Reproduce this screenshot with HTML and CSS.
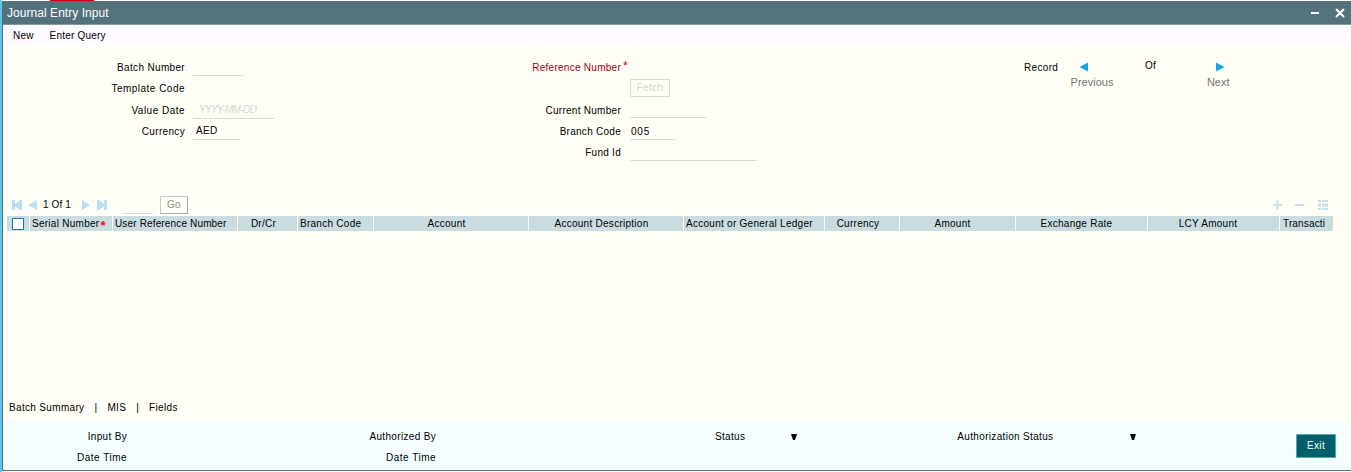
FILE: index.html
```html
<!DOCTYPE html>
<html lang="en">
<head>
<meta charset="utf-8">
<title>Journal Entry Input</title>
<link rel="stylesheet" href="styles.css">
</head>
<body>
<div class="top-strip"><span class="accent"></span></div>
<div class="window">
  <header class="titlebar">
    <h1>Journal Entry Input</h1>
    <svg class="window-controls" width="36" height="12" viewBox="0 0 36 12"><path d="M1 6h8" stroke="#fff" stroke-width="2"/><path d="M26 2l8 8M34 2l-8 8" stroke="#fff" stroke-width="2"/></svg>
  </header>
  <nav class="menu"><span>New</span><span>Enter Query</span></nav>
  <main>
    <section class="form">
      <div class="group group-left">
        <div class="row"><label>Batch Number</label><span class="field w52"></span></div>
        <div class="row"><label class="wide">Template Code</label></div>
        <div class="row"><label class="wide">Value Date</label><span class="field w82 hint">YYYY-MM-DD</span></div>
        <div class="row"><label>Currency</label><span class="field w47 value">AED</span></div>
      </div>
      <div class="group group-mid">
        <div class="row"><label class="required">Reference Number</label><span class="star">*</span></div>
        <div class="row"><label></label><button class="fetch">Fetch</button></div>
        <div class="row"><label>Current Number</label><span class="field short w77"></span></div>
        <div class="row"><label>Branch Code</label><span class="field w47 code">005</span></div>
        <div class="row"><label>Fund Id</label><span class="field w127"></span></div>
      </div>
      <div class="record">
        <span class="record-label">Record</span>
        <div class="step prev"><svg width="10" height="10" viewBox="0 0 10 10"><path d="M9 0.5v9L0.5 5z" fill="#1ca4e2"/></svg><span>Previous</span></div>
        <span class="of">Of</span>
        <div class="step next"><svg width="10" height="10" viewBox="0 0 10 10"><path d="M1 0.5v9L9.5 5z" fill="#1ca4e2"/></svg><span>Next</span></div>
      </div>
    </section>
    <div class="toolbar">
      <svg class="first" width="10" height="10" viewBox="0 0 10 10" fill="#b9dff0"><path d="M0 0h3v4l5-4h2v10H8L3 6v4H0z"/></svg>
      <svg class="back" width="10" height="10" viewBox="0 0 10 10" fill="#b9dff0"><path d="M9 0v10L0 5z"/></svg>
      <span class="page">1 Of 1</span>
      <svg class="forward" width="10" height="10" viewBox="0 0 10 10" fill="#b9dff0"><path d="M1 0v10l8-5z"/></svg>
      <svg class="last" width="10" height="10" viewBox="0 0 10 10" fill="#b9dff0"><path d="M10 0H7v4L2 0H0v10h2l5-4v4h3z"/></svg>
      <span class="page-input"></span>
      <button class="go">Go</button>
      <svg class="tools" width="56" height="10" viewBox="0 0 56 10" fill="#c5e0e8"><path d="M0 4h9v2H0zM3.5 0.5h2v9h-2zM22 4h9v2h-9z"/><path d="M45 0h3v2h-3zM49 0h6v2h-6zM45 3.5h3v3h-3zM49 3.5h6v3h-6zM45 8h3v2h-3zM49 8h6v2h-6z"/></svg>
    </div>
    <div class="table">
      <div class="thead">
        <div class="check"><span class="box"></span></div>
        <div class="serial">Serial Number<b>*</b></div>
        <div class="userref">User Reference Number</div>
        <div class="drcr">Dr/Cr</div>
        <div class="branch">Branch Code</div>
        <div class="account">Account</div>
        <div class="description">Account Description</div>
        <div class="ledger">Account or General Ledger</div>
        <div class="currency">Currency</div>
        <div class="amount">Amount</div>
        <div class="rate">Exchange Rate</div>
        <div class="lcy">LCY Amount</div>
        <div class="cut">Transacti</div>
      </div>
      <div class="tbody"></div>
    </div>
    <nav class="links"><span>Batch Summary</span><span>|</span><span>MIS</span><span>|</span><span>Fields</span></nav>
  </main>
  <footer>
    <div class="audit"><span>Input By</span><span class="wide">Date Time</span></div>
    <div class="audit authorized"><span>Authorized By</span><span class="wide">Date Time</span></div>
    <div class="status"><span>Status</span><svg width="6" height="7" viewBox="0 0 6 7"><path d="M0 0h6L4 6H2z"/></svg></div>
    <div class="status auth-status"><span>Authorization Status</span><svg width="6" height="7" viewBox="0 0 6 7"><path d="M0 0h6L4 6H2z"/></svg></div>
    <button class="exit">Exit</button>
  </footer>
</div>
</body>
</html>
```
FILE: styles.css
```css
* { box-sizing: border-box; }
body { margin: 0; width: 1351px; height: 472px; overflow: hidden; border-left: 2px solid #5bc6ea; background: #fffff7; font: 10px/12px "Liberation Sans", Arial, sans-serif; letter-spacing: .33px; color: #000; }
svg { display: block; flex: none; }
button { font: inherit; letter-spacing: inherit; padding: 0; margin: 0; background: transparent; }
.top-strip { height: 1px; padding-left: 48px; }
.accent { display: block; width: 44px; height: 1px; background: #cf0000; }
.window { height: 470px; border-left: 1px solid #53727c; border-bottom: 1px solid #53727c; display: flex; flex-direction: column; white-space: nowrap; }
.titlebar { height: 24px; flex: none; background: #53727c; border-bottom: 1px solid #82989f; display: flex; align-items: center; justify-content: space-between; padding: 0 5px 0 4px; }
h1 { margin: 0; font-size: 12px; line-height: 16px; font-weight: 400; color: #fff; letter-spacing: .05px; }
.menu { height: 20px; flex: none; background: #fffaff; display: flex; gap: 16px; padding: 5px 0 0 10px; letter-spacing: .2px; }
main { height: 376px; flex: none; padding-left: 4px; }
.form { display: flex; height: 150px; padding-top: 12px; }
.group { display: grid; grid-auto-rows: 21.3px; align-content: start; }
.group-left { width: 400px; }
.group-mid { width: 600px; }
.row { display: flex; gap: 8px; height: 21px; }
.row label { flex: none; text-align: right; line-height: 22px; }
.wide { letter-spacing: .48px; }
.group-left label { width: 178px; }
.group-mid label { width: 214px; letter-spacing: .27px; }
.group-mid .row { gap: 9px; }
.field { height: 19px; border-bottom: 1px solid #dadad6; line-height: 20px; }
.w52 { width: 52px; } .w82 { width: 82px; } .w47 { width: 47px; } .w77 { width: 77px; } .w127 { width: 127px; }
.field.short { height: 18px; }
.hint { padding-left: 6px; color: #d4d4d0; font-style: italic; line-height: 19px; letter-spacing: -.65px; }
.value { padding-left: 3px; }
.code { padding-left: 1px; letter-spacing: .8px; line-height: 21px; }
.required { color: #9c0012; }
.group-mid .star { color: #d00010; margin-left: -7px; font-size: 12px; line-height: 19px; }
.fetch { width: 40px; height: 18px; margin-top: 1px; border: 1px solid #dadad6; color: #d4d4d0; }
.record { display: flex; align-items: flex-start; padding-top: 5px; }
.record-label { width: 46px; margin: 0 0 0 17px; }
.step { display: flex; flex-direction: column; align-items: center; font-size: 11px; line-height: 14px; letter-spacing: 0; color: #757571; gap: 3px; }
.prev { width: 44px; }
.prev svg { margin-right: 16px; }
.of { margin: -2px 50px 0 31px; }
.next { width: 24px; }
.next svg { margin-left: 3px; }
.toolbar { height: 19px; margin-bottom: 2px; display: flex; align-items: center; padding-left: 5px; }
.back { margin: 0 6px; } .page { width: 37px; letter-spacing: .1px; margin-left: -1px; margin-right: 1px; } .last { margin: 0 15px 0 6px; }
.page-input { width: 31px; height: 18px; border-bottom: 1px solid #dadad6; margin-right: 7px; }
.go { width: 28px; height: 18px; border: 1px solid #b9cfd7; border-right-color: #9dafba; border-bottom-color: #9dafba; color: #8b8b87; }
.tools { margin-left: auto; margin-right: 22px; }
.table { width: 1326px; }
.thead { display: grid; grid-template-columns: 23px 83px 125px 60px 76px 155px 155px 141px 75px 116px 132px 132px 53px; height: 15px; background: #c9dde1; line-height: 16px; letter-spacing: .27px; }
.thead > div { text-align: center; border-right: 1px solid #fff; }
.thead > .cut { border: 0; text-align: left; padding-left: 3px; letter-spacing: .15px; }
.thead > .serial, .thead > .userref, .thead > .branch, .thead > .ledger { text-align: left; padding-left: 2px; }
.thead > .serial { display: flex; }
.thead > .userref { letter-spacing: .15px; }
.thead b { color: #f21414; font-size: 13px; line-height: 19px; height: 15px; letter-spacing: 0; margin-left: 1px; }
.thead .check { display: grid; place-items: center; }
.box { width: 12px; height: 12px; background: #fff; border: 1px solid #217ca9; }
.thead .drcr { padding-right: 8px; }
.thead .account, .thead .description { padding-right: 9px; }
.thead .currency { padding-right: 8px; }
.thead .amount, .thead .rate { padding-right: 10px; }
.thead .lcy { padding-right: 11px; }
.tbody { height: 161px; border-left: 1px solid #fbf7ff; border-right: 1px solid #fbf7ff; }
.links { display: flex; gap: 10px; padding: 10px 0 0 2px; }
footer { flex: 1; background: #f6ffff; display: flex; padding-top: 10px; }
.audit { width: 124px; display: flex; flex-direction: column; align-items: flex-end; gap: 9px; }
.authorized { width: 309px; }
.status { display: flex; margin-left: 279px; gap: 46px; }
.status svg { margin-top: 3px; }
.auth-status { margin-left: 160px; gap: 77px; }
.exit { width: 40px; height: 24px; margin: 3px 15px 0 auto; background: #005f6b; color: #fff; border: 1px solid #5ba8ad; }
```
